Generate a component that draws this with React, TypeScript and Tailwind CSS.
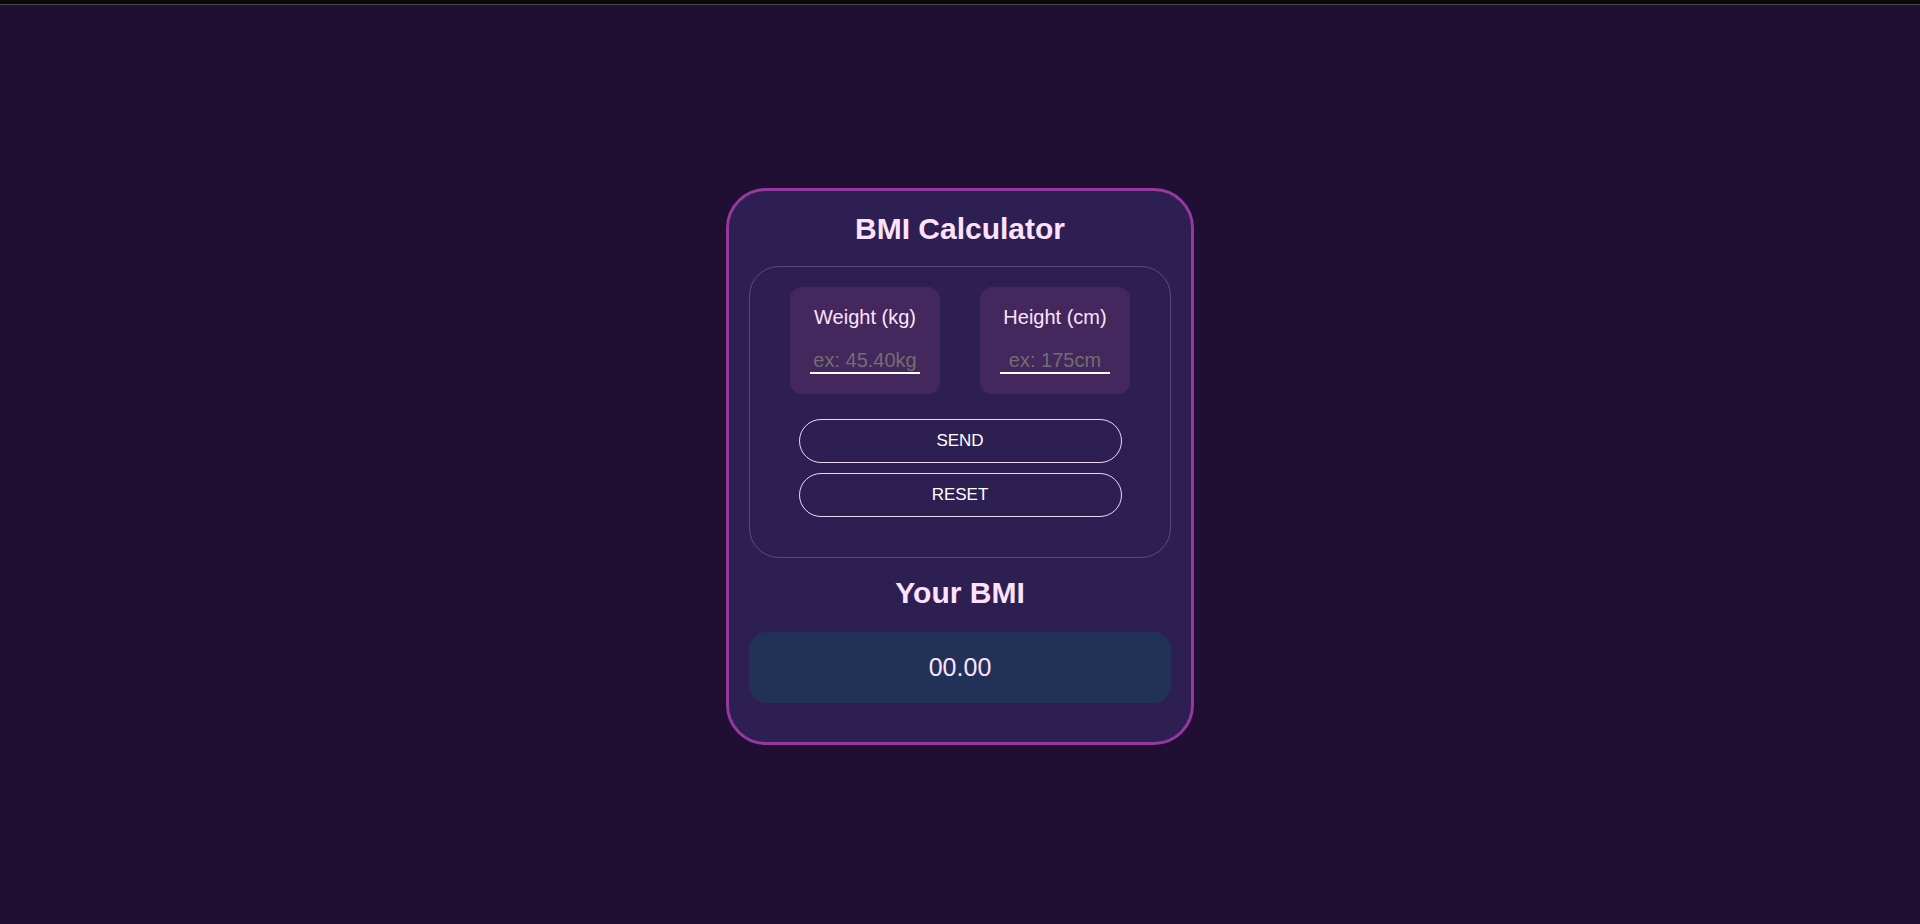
import { useState } from 'react'

export default function App() {
  const [weight, setWeight] = useState('')
  const [height, setHeight] = useState('')
  const [bmi, setBmi] = useState('00.00')

  const send = () => {
    const w = parseFloat(weight)
    const h = parseFloat(height) / 100
    if (w > 0 && h > 0) setBmi((w / (h * h)).toFixed(2))
  }

  const reset = () => {
    setWeight('')
    setHeight('')
    setBmi('00.00')
  }

  return (
    <div className="min-h-screen bg-[#200f32] font-['Liberation_Sans',Arial,sans-serif]">
      {/* top strip */}
      <div className="h-[4px] bg-[#0a0a0a]" />
      <div className="h-px bg-[#4a4a4a]" />

      <div className="flex justify-center pt-[183px]">
        <div className="w-[468px] rounded-[40px] border-[3px] border-[#96389e] bg-[#2e1f52] px-[20px] pt-[21px] pb-[39px]">
          <h1 className="text-center text-[30px] leading-[34px] font-bold text-[#fde2ff]">BMI Calculator</h1>

          {/* form */}
          <div className="mt-[20px] rounded-[30px] border border-[#ffffff33] pt-[20px] pb-[40px]">
            <div className="flex justify-center gap-[40px]">
              <div className="flex w-[150px] flex-col items-center rounded-[12px] bg-[#44275c] px-[20px] pt-[19px] pb-[20px]">
                <label className="text-[20px] leading-[23px] text-[#fde2ff]">Weight (kg)</label>
                <input
                  value={weight}
                  onChange={(e) => setWeight(e.target.value)}
                  placeholder="ex: 45.40kg"
                  className="mt-[20px] w-[110px] border-b-2 border-white bg-transparent text-center text-[20px] leading-[23px] text-white outline-none placeholder:text-[#6f6f6f]"
                />
              </div>
              <div className="flex w-[150px] flex-col items-center rounded-[12px] bg-[#44275c] px-[20px] pt-[19px] pb-[20px]">
                <label className="text-[20px] leading-[23px] text-[#fde2ff]">Height (cm)</label>
                <input
                  value={height}
                  onChange={(e) => setHeight(e.target.value)}
                  placeholder="ex: 175cm"
                  className="mt-[20px] w-[110px] border-b-2 border-white bg-transparent text-center text-[20px] leading-[23px] text-white outline-none placeholder:text-[#6f6f6f]"
                />
              </div>
            </div>

            <div className="mt-[25px] flex flex-col items-center gap-[10px]">
              <button
                onClick={send}
                className="h-[44px] w-[323px] rounded-full border border-[#f0d6f5] text-[17px] leading-[20px] text-white"
              >
                SEND
              </button>
              <button
                onClick={reset}
                className="h-[44px] w-[323px] rounded-full border border-[#f0d6f5] text-[17px] leading-[20px] text-white"
              >
                RESET
              </button>
            </div>
          </div>

          <h2 className="mt-[18px] text-center text-[30px] leading-[34px] font-bold text-[#fde2ff]">Your BMI</h2>

          <div className="mt-[22px] flex h-[71px] items-center justify-center rounded-[18px] bg-[#223257] text-[25px] leading-[29px] text-[#fde2ff]">
            {bmi}
          </div>
        </div>
      </div>
    </div>
  )
}
